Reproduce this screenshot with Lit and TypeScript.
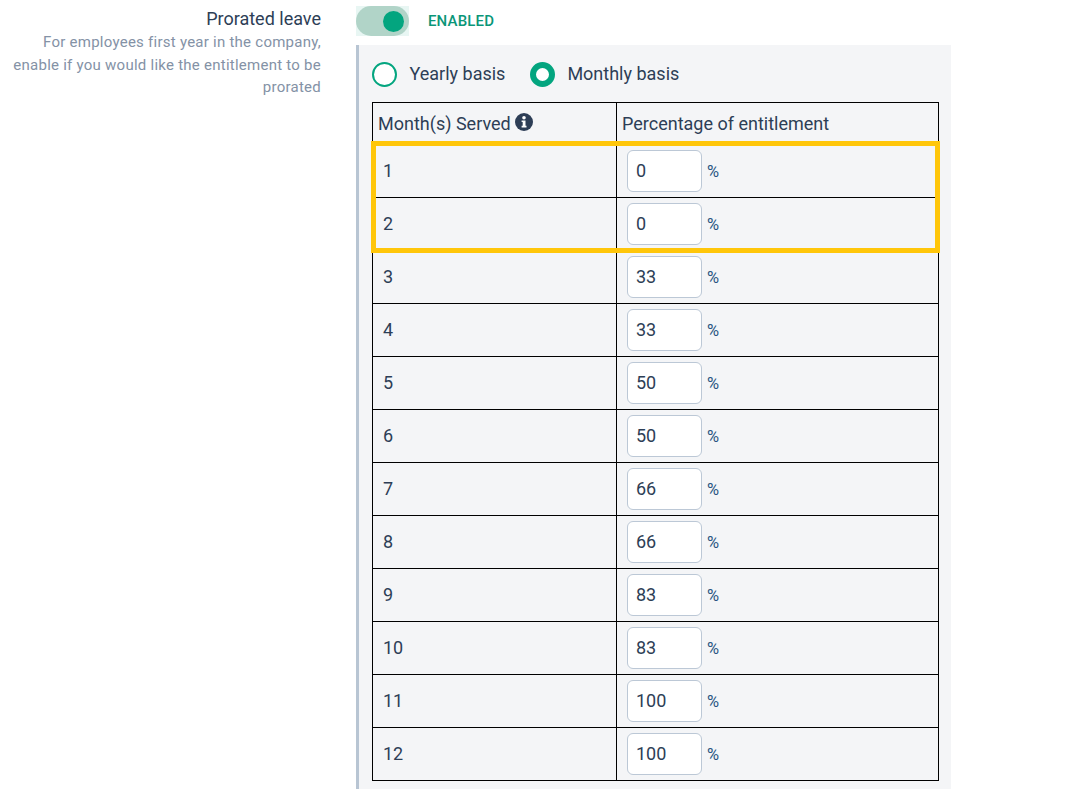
import { LitElement, html, css } from "lit";
import { customElement } from "lit/decorators.js";

const rows: [number, number][] = [
  [1, 0], [2, 0], [3, 33], [4, 33], [5, 50], [6, 50],
  [7, 66], [8, 66], [9, 83], [10, 83], [11, 100], [12, 100],
];

@customElement("app-root")
export class AppRoot extends LitElement {
  static styles = css`
    :host {
      display: block;
      height: 789px;
      overflow: hidden;
      background: #fff;
      font-family: Roboto, "Liberation Sans", sans-serif;
      color: #2d3e56;
    }
    .page {
      display: grid;
      grid-template-columns: 321px 595px;
      column-gap: 35px;
      padding-top: 6px;
    }
    .label {
      text-align: right;
      padding-top: 3px;
      padding-left: 10px;
    }
    .title {
      font-size: 18px;
      line-height: 20px;
      color: #2d3e56;
    }
    .desc {
      margin-top: 2px;
      font-size: 15px;
      letter-spacing: 0.25px;
      line-height: 22.5px;
      color: #8492a6;
    }
    .toggle-row {
      display: flex;
      align-items: center;
      height: 30px;
      gap: 19px;
    }
    .toggle {
      width: 53px;
      height: 30px;
      background: #e8f6f3;
      display: flex;
    }
    .track {
      flex: 1;
      border-radius: 15px;
      background: #b1d4c8;
      display: flex;
      align-items: center;
      justify-content: flex-end;
      padding-right: 5px;
    }
    .knob {
      width: 21px;
      height: 21px;
      border-radius: 50%;
      background: #03a57f;
    }
    .state {
      font-size: 15px;
      font-weight: 500;
      letter-spacing: 0.15px;
      color: #0a9678;
    }
    .panel {
      margin-top: 9px;
      height: 744px;
      box-sizing: border-box;
      background: #f4f5f7;
      border-left: 3px solid #b8c5d3;
      padding: 16px 12px 0 13px;
    }
    .radios {
      display: flex;
      align-items: center;
      height: 26px;
      margin-bottom: 15px;
    }
    .radio {
      display: flex;
      align-items: center;
      gap: 12.5px;
      font-size: 18px;
      margin-right: 24.5px;
    }
    .radio-text {
      padding-bottom: 2px;
    }
    .dot {
      width: 25px;
      height: 25px;
      box-sizing: border-box;
      border-radius: 50%;
      background: #fff;
      border: 2px solid #03a57f;
    }
    .dot.on {
      border-width: 6.5px;
    }
    .wrap {
      position: relative;
      width: 567px;
    }
    table {
      border-collapse: collapse;
      width: 567px;
      table-layout: fixed;
      font-size: 18px;
    }
    th, td {
      border: 1px solid #000;
      padding: 0;
      font-weight: 400;
      text-align: left;
    }
    col.first {
      width: 244px;
    }
    thead tr {
      height: 42px;
    }
    th {
      padding-left: 5px;
    }
    .info {
      display: inline-block;
      vertical-align: -1px;
    }
    tbody tr {
      height: 53px;
    }
    td.n {
      padding-left: 10px;
      padding-bottom: 2px;
    }
    td.v {
      padding-left: 10px;
    }
    .cell {
      display: flex;
      align-items: center;
      gap: 5px;
    }
    .input {
      width: 75px;
      height: 42px;
      box-sizing: border-box;
      background: #fff;
      border: 1px solid #bcc8d6;
      border-radius: 6px;
      padding-left: 8px;
      padding-bottom: 2px;
      display: flex;
      align-items: center;
      font-size: 18px;
      color: #2d3e56;
    }
    .pct {
      font-size: 16.5px;
      color: #2b5583;
    }
    .highlight {
      position: absolute;
      left: -1px;
      top: 39px;
      width: 569px;
      height: 112px;
      box-sizing: border-box;
      border: 5px solid #ffc60a;
      pointer-events: none;
    }
  `;

  render() {
    return html`
      <div class="page">
        <div class="label">
          <div class="title">Prorated leave</div>
          <div class="desc">For employees first year in the company, enable if you would like the entitlement to be prorated</div>
        </div>
        <div>
          <div class="toggle-row">
            <div class="toggle"><div class="track"><div class="knob"></div></div></div>
            <div class="state">ENABLED</div>
          </div>
          <div class="panel">
            <div class="radios">
              <div class="radio"><span class="dot"></span><span class="radio-text">Yearly basis</span></div>
              <div class="radio"><span class="dot on"></span><span class="radio-text">Monthly basis</span></div>
            </div>
            <div class="wrap">
              <table>
                <colgroup><col class="first" /><col /></colgroup>
                <thead>
                  <tr>
                    <th>Month(s) Served
                      <svg class="info" width="18" height="18" viewBox="0 0 18 18">
                        <circle cx="9" cy="9" r="9" fill="#2d3e56"></circle>
                        <circle cx="9" cy="4.8" r="1.8" fill="#fff"></circle>
                        <path d="M6.6 7.4h3.9v5.4h1v1.6H6.6v-1.6h1.1V9H6.6z" fill="#fff"></path>
                      </svg>
                    </th>
                    <th>Percentage of entitlement</th>
                  </tr>
                </thead>
                <tbody>
                  ${rows.map(
                    ([m, v]) => html`
                      <tr>
                        <td class="n">${m}</td>
                        <td class="v">
                          <div class="cell"><div class="input">${v}</div><span class="pct">%</span></div>
                        </td>
                      </tr>
                    `
                  )}
                </tbody>
              </table>
              <div class="highlight"></div>
            </div>
          </div>
        </div>
      </div>
    `;
  }
}
